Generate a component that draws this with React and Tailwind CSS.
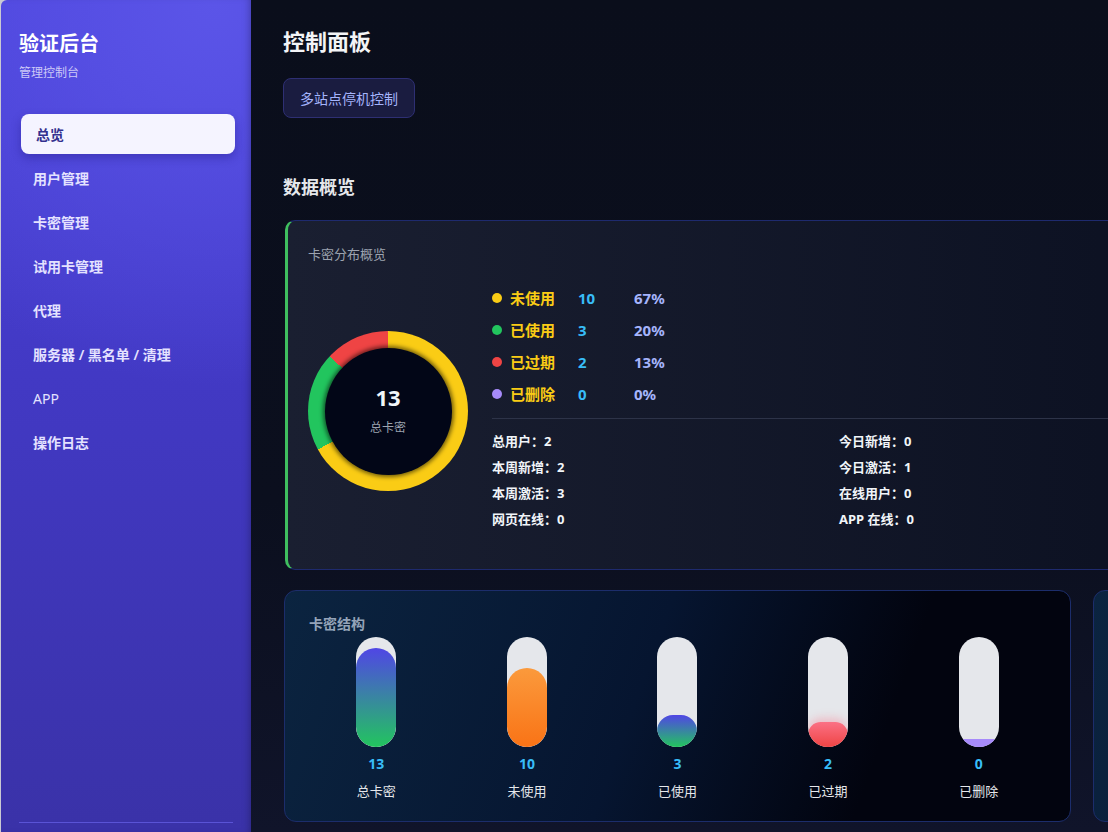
import React from 'react'

const navItems = [
  { label: '总览', active: true },
  { label: '用户管理' },
  { label: '卡密管理' },
  { label: '试用卡管理' },
  { label: '代理' },
  { label: '服务器 / 黑名单 / 清理' },
  { label: 'APP', light: true },
  { label: '操作日志' }
]

const legend = [
  { label: '未使用', count: 10, pct: '67%', dot: 'bg-[#facc15]' },
  { label: '已使用', count: 3, pct: '20%', dot: 'bg-[#22c55e]' },
  { label: '已过期', count: 2, pct: '13%', dot: 'bg-[#ef4444]' },
  { label: '已删除', count: 0, pct: '0%', dot: 'bg-[#a78bfa]' }
]

const stats = [
  ['总用户', 2],
  ['今日新增', 0],
  ['本周新增', 2],
  ['今日激活', 1],
  ['本周激活', 3],
  ['在线用户', 0],
  ['网页在线', 0],
  ['APP 在线', 0]
]

// fill heights are in px inside a 110px track
const bars = [
  { label: '总卡密', value: 13, h: 99, fill: 'bg-[linear-gradient(to_bottom,#5046e5,#22c55e)]' },
  { label: '未使用', value: 10, h: 79, fill: 'bg-[linear-gradient(to_bottom,#fb9a3c,#f97316)]' },
  { label: '已使用', value: 3, h: 32, fill: 'bg-[linear-gradient(to_bottom,#5046e5,#22c55e)]' },
  { label: '已过期', value: 2, h: 25, fill: 'bg-[linear-gradient(to_bottom,#fb7185,#ef4444)] shadow-[0_-4px_8px_rgba(251,113,133,0.35)]' },
  { label: '已删除', value: 0, h: 8, fill: 'bg-[#a78bfa]' }
]

function Sidebar() {
  return (
    <aside className="w-[250px] shrink-0 ml-px rounded-tl-[6px] flex flex-col bg-[radial-gradient(circle_at_85%_0%,#5b55e8_0%,transparent_45%),linear-gradient(to_bottom,#4c43dc,#4239c4_45%,#3a32a8)] shadow-[inset_-6px_0_8px_-6px_rgba(0,0,0,0.35)]">
      <div className="px-[18px] pt-[30px]">
        <div className="text-[20px] font-bold text-white leading-7">验证后台</div>
        <div className="text-[12px] text-[#cdc9f7] mt-[7px] leading-4">管理控制台</div>
      </div>
      <nav className="mt-[33px] pl-[20px] pr-[16px] flex flex-col gap-1">
        {navItems.map(item =>
          item.active ? (
            <div
              key={item.label}
              className="h-10 rounded-lg bg-[#f5f4ff] shadow-[0_4px_10px_rgba(30,20,120,0.35)] flex items-center px-[15px] text-[14px] font-bold text-[#33308f]"
            >
              {item.label}
            </div>
          ) : (
            <div
              key={item.label}
              className={`h-10 flex items-center px-3 text-[14px] text-[#e4e2ff] ${item.light ? 'font-normal' : 'font-semibold'}`}
            >
              {item.label}
            </div>
          )
        )}
      </nav>
      <div className="mt-auto mx-[18px] mb-[9px] border-t border-[#5a53d6]" />
    </aside>
  )
}

function Donut() {
  return (
    <div className="w-40 h-40 rounded-full bg-[conic-gradient(#facc15_0_67%,#22c55e_67%_87%,#ef4444_87%_100%)] flex items-center justify-center shrink-0">
      <div className="w-[127px] h-[127px] rounded-full bg-[#020617] shadow-[0_0_4px_2px_rgba(0,0,0,0.55)] flex flex-col items-center justify-center">
        <div className="text-[22px] font-bold text-[#f1f5f9] leading-7 mt-[-4px]">13</div>
        <div className="text-[12px] text-[#9ca3af] mt-[9px] leading-4">总卡密</div>
      </div>
    </div>
  )
}

function DistributionCard() {
  return (
    <div className="h-[350px] rounded-[10px] border border-[#1e2a6e] border-l-[3px] border-l-[#3fbf5f] bg-[linear-gradient(to_right,#1a1f31,#0c1122_55%,#03061a)] pl-[20px] pt-[23px]">
      <div className="text-[13px] text-[#9ca3af] leading-5">卡密分布概览</div>
      <div className="flex items-start mt-[18px]">
        <div className="mt-[49px]">
          <Donut />
        </div>
        <div className="ml-6 flex-1">
          <div className="flex flex-col">
            {legend.map(row => (
              <div key={row.label} className="h-8 flex items-center text-[15px] font-bold">
                <span className={`w-[10px] h-[10px] rounded-full ${row.dot}`} />
                <span className="ml-2 w-[68px] text-[#facc15]">{row.label}</span>
                <span className="w-14 text-[#38bdf8]">{row.count}</span>
                <span className="text-[#a5b4fc]">{row.pct}</span>
              </div>
            ))}
          </div>
          <div className="mt-[8px] border-t border-[#2d3348]" />
          <div className="grid grid-cols-[347px_1fr] mt-[12px] gap-y-[6px]">
            {stats.map(([k, v]) => (
              <div key={k} className="text-[13px] font-bold text-[#f1f5f9] leading-5">
                {k}：{v}
              </div>
            ))}
          </div>
        </div>
      </div>
    </div>
  )
}

function StructureCard() {
  return (
    <div className="h-[232px] rounded-[12px] border border-[#1c2d6b] bg-[linear-gradient(110deg,#0b2440,#061530_45%,#02040f_75%)] px-6 pt-[23px]">
      <div className="text-[14px] font-bold text-[#94a3b8] leading-5">卡密结构</div>
      <div className="grid grid-cols-5 mt-[3px] mx-[-8px]">
        {bars.map(bar => (
          <div key={bar.label} className="flex flex-col items-center">
            <div className="w-10 h-[110px] rounded-full bg-[#e5e7eb] overflow-hidden flex flex-col justify-end">
              <div className={`w-full rounded-full ${bar.fill}`} style={{ height: bar.h }} />
            </div>
            <div className="mt-[9px] text-[14px] font-bold text-[#38bdf8] leading-4">{bar.value}</div>
            <div className="mt-[11px] text-[13px] text-[#e5e7eb] leading-4">{bar.label}</div>
          </div>
        ))}
      </div>
    </div>
  )
}

export default function App() {
  return (
    <div
      className="h-screen flex bg-[#c9c9d3] overflow-hidden"
      style={{ fontFamily: '"Noto Sans", "Noto Sans CJK SC", sans-serif' }}
    >
      <Sidebar />
      <main className="flex-1 min-w-0 bg-[linear-gradient(to_bottom,#0a0e1b,#0b0f1e_60%,#10142a)] overflow-hidden pl-8 pt-[25px]">
        <div className="w-[1596px]">
          <h1 className="text-[22px] font-bold text-[#f3f4f6] leading-8">控制面板</h1>
          <button className="mt-[21px] h-10 px-4 rounded-lg border border-[#2e2f73] bg-[#1a1c40] text-[14px] text-[#a5b4fc]">
            多站点停机控制
          </button>
          <h2 className="mt-[57px] text-[18px] font-bold text-[#e5e7eb] leading-6">数据概览</h2>
          <div className="mt-[21px] ml-[2px]">
            <DistributionCard />
          </div>
          <div className="mt-[20px] grid grid-cols-[787px_787px] gap-[22px] ml-px">
            <StructureCard />
            <div className="h-[232px] rounded-[12px] border border-[#1c2d6b] bg-[linear-gradient(110deg,#0b2440,#061530_45%,#02040f_75%)]" />
          </div>
        </div>
      </main>
    </div>
  )
}
